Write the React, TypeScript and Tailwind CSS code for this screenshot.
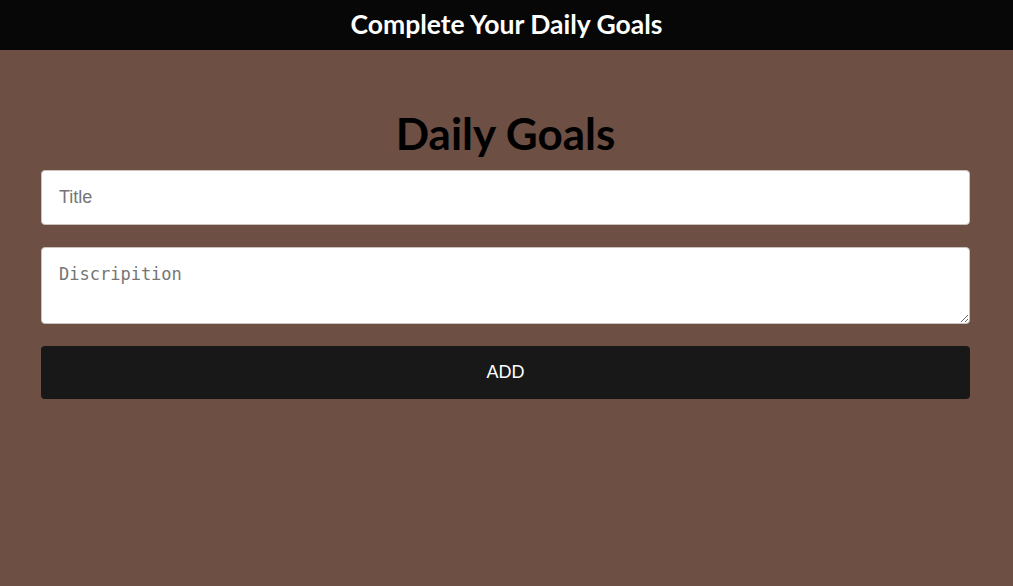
import { useState } from 'react';

const App = () => {
  const [title, setTitle] = useState('');
  const [desc, setDesc] = useState('');

  return (
    <div className="min-h-[586px] bg-[#6d4f44]">
      <header className="h-[50px] bg-[#070707] flex items-center justify-center">
        <h1 className="text-white text-[26.5px] font-bold font-['Lato',sans-serif]">Complete Your Daily Goals</h1>
      </header>

      <div className="w-[929px] ml-[41px] pt-[56px]">
        <h2 className="text-center text-black text-[44px] leading-[54px] font-bold font-['Lato',sans-serif] mb-[10px]">
          Daily Goals
        </h2>
        <form className="flex flex-col gap-[22px]" onSubmit={(e) => e.preventDefault()}>
          <input
            value={title}
            onChange={(e) => setTitle(e.target.value)}
            placeholder="Title"
            className="h-[55px] bg-white rounded-[4px] border border-[#c9c2bf] px-[17px] text-[18px] font-['Liberation_Sans',Arial,sans-serif] placeholder:text-[#757575] outline-none"
          />
          <textarea
            value={desc}
            onChange={(e) => setDesc(e.target.value)}
            placeholder="Discripition"
            className="h-[77px] bg-white rounded-[4px] border border-[#c9c2bf] px-[17px] py-[16px] text-[17px] leading-[20px] font-['DejaVu_Sans_Mono',monospace] placeholder:text-[#757575] outline-none"
          />
          <button
            type="submit"
            className="h-[53px] bg-[#181818] rounded-[4px] text-white text-[18px] font-['Liberation_Sans',Arial,sans-serif]"
          >
            ADD
          </button>
        </form>
      </div>
    </div>
  );
};

export default App;
